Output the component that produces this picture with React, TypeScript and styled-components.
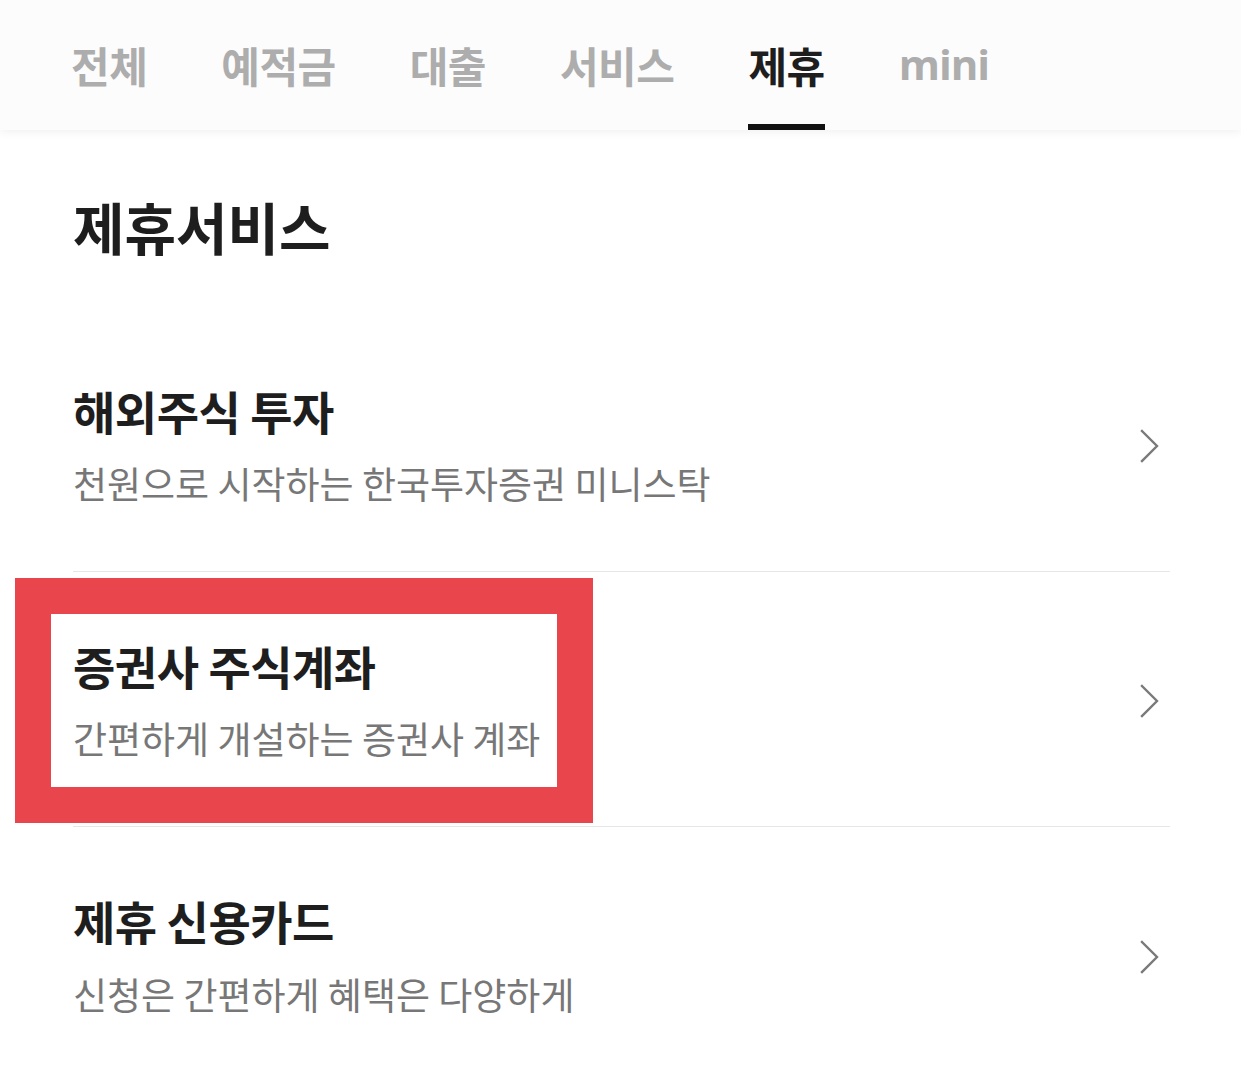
import React from "react";
import styled, {createGlobalStyle} from "styled-components";

const GlobalStyle = createGlobalStyle`
    html, body {
        margin: 0;
        padding: 0;
        background: #ffffff;
    }
    body {
        font-family: "Noto Sans CJK KR", "Noto Sans", sans-serif;
        color: #222222;
    }
`

const tabs = ["전체", "예적금", "대출", "서비스", "제휴", "mini"]

const items = [
    {title: "해외주식 투자", desc: "천원으로 시작하는 한국투자증권 미니스탁", marked: false},
    {title: "증권사 주식계좌", desc: "간편하게 개설하는 증권사 계좌", marked: true},
    {title: "제휴 신용카드", desc: "신청은 간편하게 혜택은 다양하게", marked: false},
]

const Chevron = () => (
    <svg width="22" height="34" viewBox="0 0 22 34" fill="none">
        <path d="M3 2 L18 17 L3 32" stroke="#7a7a7a" strokeWidth="2.4" strokeLinecap="square"/>
    </svg>
)

export default function App() {
    return (
        <Page>
            <GlobalStyle/>
            <TabBar>
                {tabs.map(t => (
                    <Tab key={t} active={t === "제휴"} latin={t === "mini"}>{t}</Tab>
                ))}
            </TabBar>

            <Content>
                <PageTitle>제휴서비스</PageTitle>
                <List>
                    {items.map(item => (
                        <Row key={item.title}>
                            <RowText>
                                <RowTitle>{item.title}</RowTitle>
                                <RowDesc>{item.desc}</RowDesc>
                            </RowText>
                            <Chevron/>
                            {item.marked && <Marker/>}
                        </Row>
                    ))}
                </List>
            </Content>
        </Page>
    )
}

const Page = styled.div`
    width: 1241px;
    min-height: 1070px;
    background: #ffffff;
    overflow: hidden;
`

const TabBar = styled.nav`
    display: flex;
    align-items: stretch;
    gap: 74px;
    height: 130px;
    padding: 0 71px;
    background: #fcfcfc;
    box-shadow: 0 3px 8px rgba(0, 0, 0, 0.05);
    position: relative;
    z-index: 1;
`

const Tab = styled.div<{ active?: boolean; latin?: boolean }>`
    display: flex;
    align-items: center;
    padding-top: ${p => p.latin ? "2px" : "4px"};
    box-sizing: border-box;
    font-family: ${p => p.latin ? `"Open Sans", "Noto Sans", sans-serif` : `"Noto Sans CJK KR", sans-serif`};
    font-size: 42px;
    font-weight: 700;
    letter-spacing: ${p => p.latin ? "-1px" : "-0.5px"};
    color: ${p => p.active ? "#1e1e1e" : "#adadad"};
    border-bottom: 6px solid ${p => p.active ? "#111111" : "transparent"};
`

const Content = styled.main`
    padding: 0 71px 0 73px;
`

const PageTitle = styled.h1`
    margin: 0;
    padding-top: 54px;
    height: 187px;
    box-sizing: border-box;
    font-size: 56px;
    font-weight: 700;
    letter-spacing: 0;
    line-height: 1.5;
    color: #1e1e1e;
`

const List = styled.div`
    display: flex;
    flex-direction: column;
`

const Row = styled.div`
    position: relative;
    display: flex;
    align-items: center;
    justify-content: space-between;
    height: 255px;
    box-sizing: border-box;
    padding-right: 9px;
    border-bottom: 1px solid #e6e6e6;

    svg {
        margin-top: 4px;
    }

    &:last-child {
        border-bottom: none;
    }
`

const RowText = styled.div`
    display: flex;
    flex-direction: column;
    gap: 19px;
`

const RowTitle = styled.div`
    font-size: 46px;
    font-weight: 700;
    letter-spacing: -0.5px;
    line-height: 1.3;
    color: #1e1e1e;
`

const RowDesc = styled.div`
    font-size: 37px;
    font-weight: 400;
    letter-spacing: 0;
    line-height: 1.3;
    color: #777777;
`

const Marker = styled.div`
    position: absolute;
    left: -58px;
    top: 6px;
    width: 578px;
    height: 245px;
    box-sizing: border-box;
    border: 36px solid #e8464c;
    pointer-events: none;
`
